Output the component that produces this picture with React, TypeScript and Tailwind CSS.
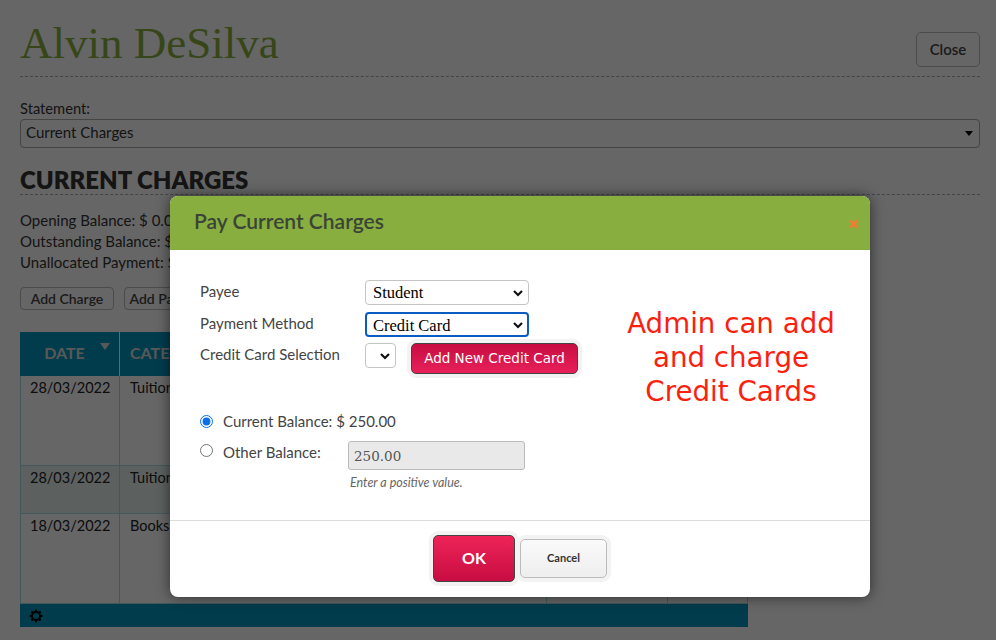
import React from 'react';

const chevron = (
  <svg width="12" height="8" viewBox="0 0 12 8" className="absolute right-[5px] top-1/2 -translate-y-1/2 pointer-events-none">
    <path d="M2 2l4 4 4-4" fill="none" stroke="#111" strokeWidth="2.2" />
  </svg>
);

function Select({ value, className }: { value: string; className: string }) {
  return (
    <div className={`relative h-[25px] ${className}`}>
      <select
        defaultValue={value}
        className="appearance-none w-full h-full rounded-[4px] border border-[#c4c4c4] bg-white pb-[4px] pl-[7px] font-['Liberation_Serif',serif] text-[16.5px] text-black outline-none"
      >
        <option>{value}</option>
      </select>
      {chevron}
    </div>
  );
}

function Row({ date, cat, h, shaded }: { date: string; cat: string; h: string; shaded?: boolean }) {
  return (
    <div className={`flex border-b border-l border-[#a8dde0] ${h} ${shaded ? 'bg-[#e6f0ee]' : ''}`}>
      <div className="w-[99px] border-r border-[#a8dde0] pl-[9px] pt-[1px]">{date}</div>
      <div className="w-[427px] border-r border-[#a8dde0] pl-[10px] pt-[1px]">{cat}</div>
      <div className="w-[121px] border-r border-[#a8dde0]" />
      <div className="w-[80px] border-r border-[#a8dde0]" />
    </div>
  );
}

export default function App() {
  return (
    <div className="relative h-[640px] w-[996px] overflow-hidden bg-white font-['Lato',sans-serif] text-[15px] text-[#333]">
      <div className="pl-5 pr-4 pt-[15px]">
        <div className="flex h-[62px] items-start justify-between border-b border-dashed border-[#aaa]">
          <h1 className="font-['Liberation_Serif',serif] text-[45px] leading-[56px] text-[#8bb03e]">Alvin DeSilva</h1>
          <button className="mt-[17px] h-[35px] w-[64px] rounded-[5px] border border-[#bbb] text-[15px] font-semibold text-[#444] shadow-[0_0_0_3px_rgba(255,255,255,0.06)]">Close</button>
        </div>

        <div className="mt-[21px] text-[14.7px] leading-[20px]">Statement:</div>
        <div className="relative mt-[1px] flex h-[29px] items-center rounded-[4px] border border-[#aaa] pb-[2px] pl-[5px]">
          Current Charges
          <div className="absolute right-[6px] top-[11px] h-0 w-0 border-x-[4.5px] border-t-[5px] border-x-transparent border-t-black" />
        </div>

        <h2 className="mt-[18px] h-[29px] border-b border-dashed border-[#aaa] text-[24px] leading-[27px] font-extrabold text-[#333]">CURRENT CHARGES</h2>

        <div className="mt-[15px] leading-[21px]">
          <div>Opening Balance: $ 0.00</div>
          <div>Outstanding Balance: $ 0.00</div>
          <div>Unallocated Payment: $ 0.00</div>
        </div>

        <div className="mt-[14px] flex gap-[10px]">
          <button className="h-[23px] w-[94px] rounded-[4px] border border-[#bbb] pb-[2px] text-[14px] font-semibold text-[#444]">Add Charge</button>
          <button className="h-[23px] w-[94px] rounded-[4px] border border-[#bbb] pb-[2px] text-[14px] font-semibold text-[#444]">Add Payment</button>
        </div>

        <div className="mt-[22px] w-[728px] text-[14.5px] text-[#222]">
          <div className="flex h-[44px] bg-[#0296bd] text-[16px] text-[#ddd]">
            <div className="relative flex w-[100px] items-center justify-center border-r border-white pb-[3px] pr-[10px] font-bold">
              DATE
              <div className="absolute right-[9px] top-[11px] h-0 w-0 border-x-[5px] border-t-[7px] border-x-transparent border-t-[#ddd]" />
            </div>
            <div className="flex items-center pb-[3px] pl-[10px] font-bold">CATEGORY</div>
          </div>
          <Row date="28/03/2022" cat="Tuition" h="h-[90px]" />
          <Row date="28/03/2022" cat="Tuition" h="h-[48px]" shaded />
          <Row date="18/03/2022" cat="Books" h="h-[90px]" />
          <div className="flex h-[23px] items-center bg-[#0296bd] pl-[9px]">
            <svg width="14" height="14" viewBox="0 0 24 24" fill="none" stroke="#000" strokeWidth="3.5">
              <circle cx="12" cy="12" r="7" />
              <path d="M12 1v4M12 19v4M1 12h4M19 12h4M4.2 4.2l2.8 2.8M17 17l2.8 2.8M4.2 19.8L7 17M17 7l2.8-2.8" />
            </svg>
          </div>
        </div>
      </div>

      <div className="absolute inset-0 bg-black/60" />

      <div className="absolute left-[170px] top-[196px] flex h-[401px] w-[700px] flex-col overflow-hidden rounded-[8px] bg-white shadow-[0_0_14px_rgba(0,0,0,0.55)]">
        <div className="relative flex h-[54px] items-center bg-[#87ae3f] pb-[5px] pl-[24px]">
          <span className="text-[21px] font-semibold text-[#3b4437]">Pay Current Charges</span>
          <svg width="10" height="10" viewBox="0 0 10 10" className="absolute right-[11px] top-[23px]">
            <path d="M1.5 1.5l7 7M8.5 1.5l-7 7" stroke="#f47b30" strokeWidth="2.6" />
          </svg>
        </div>

        <div className="flex flex-1 border-b border-[#ddd] pl-[30px] text-[#444]">
          <div className="w-[400px] shrink-0">
            <div className="mt-[30px] flex h-[25px] items-center">
              <span className="w-[165px] pb-[2px]">Payee</span>
              <Select value="Student" className="w-[164px]" />
            </div>
            <div className="mt-[7px] flex h-[25px] items-center">
              <span className="w-[165px] pb-[2px]">Payment Method</span>
              <div className="relative h-[25px] w-[164px]">
                <select
                  defaultValue="Credit Card"
                  className="appearance-none h-full w-full rounded-[4px] border-2 border-[#0a5cc2] bg-white pb-[4px] pl-[6px] font-['Liberation_Serif',serif] text-[16.5px] text-black outline-none"
                >
                  <option>Credit Card</option>
                </select>
                {chevron}
              </div>
            </div>
            <div className="mt-[6px] flex items-start">
              <span className="w-[165px] leading-[23px]">Credit Card Selection</span>
              <Select value="" className="w-[31px]" />
              <button className="ml-[15px] h-[31px] w-[167px] rounded-[5px] border border-[#444] bg-gradient-to-b from-[#c70c42] to-[#e8205a] font-['DejaVu_Sans',sans-serif] text-[13.5px] text-white shadow-[0_0_0_4px_#f3f3f3]">Add New Credit Card</button>
            </div>
            <div className="mt-[37px] flex h-[20px] items-center">
              <input type="radio" defaultChecked name="bal" className="m-0 h-[13px] w-[13px] accent-[#0a6fe8]" />
              <span className="ml-[10px]">Current Balance: $ 250.00</span>
            </div>
            <div className="mt-[10px] flex items-start">
              <input type="radio" name="bal" className="m-0 mt-[3px] h-[13px] w-[13px]" />
              <span className="ml-[10px] w-[125px] pt-[1px] leading-[20px]">Other Balance:</span>
              <div>
                <input
                  readOnly
                  value="250.00"
                  className="h-[29px] w-[177px] rounded-[3px] border border-[#bbb] bg-[#e9e9e9] pl-[5px] font-['DejaVu_Serif',serif] text-[13.5px] text-[#555] outline-none"
                />
                <div className="mt-[4px] pl-[2px] text-[12.5px] italic text-[#666]">Enter a positive value.</div>
              </div>
            </div>
          </div>
          <div className="w-[262px] pt-[57px] text-center font-['DejaVu_Sans',sans-serif] text-[27.7px] leading-[34px] text-[#fb1f0f]">
            Admin can add
            <br />
            and charge
            <br />
            Credit Cards
          </div>
        </div>

        <div className="flex h-[76px] items-center justify-center gap-[5px] pb-[2px]">
          <button className="h-[47px] w-[82px] rounded-[5px] border border-[#444] bg-gradient-to-b from-[#ee2358] to-[#c70c42] text-[16px] font-bold text-white shadow-[0_0_0_4px_#f3f3f3]">OK</button>
          <button className="h-[39px] w-[87px] rounded-[5px] border border-[#bbb] bg-gradient-to-b from-[#fafafa] to-[#eee] text-[11px] font-bold text-[#333] shadow-[0_0_0_4px_#f3f3f3]">Cancel</button>
        </div>
      </div>
    </div>
  );
}
